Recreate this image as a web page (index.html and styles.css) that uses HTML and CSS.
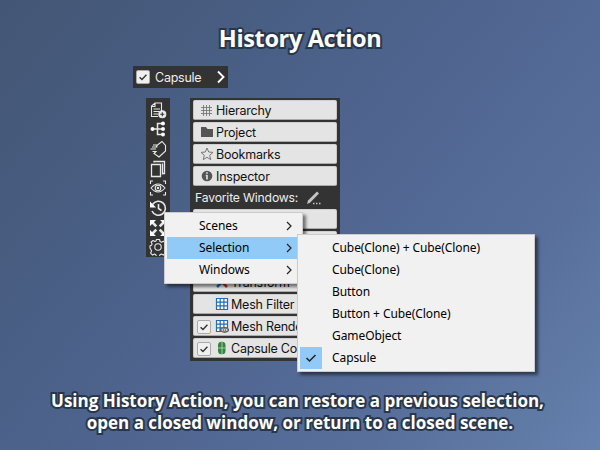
FILE: index.html
```html
<!DOCTYPE html>
<html lang="en">
<head>
<meta charset="utf-8">
<title>History Action</title>
<link rel="stylesheet" href="styles.css">
</head>
<body>
<main class="scene">
  <h1 class="title">History Action</h1>

  <div class="crumb">
    <span class="check"><svg viewBox="0 0 14 14"><path d="M3 7.3 5.8 10 11 4.3"/></svg></span>
    <span class="crumb-name">Capsule</span>
    <svg class="crumb-arrow" viewBox="0 0 10 14"><path d="M2 1.500 7.500 7 2 12.500"/></svg>
  </div>

  <div class="workspace">
    <nav class="toolbar">
      <svg viewBox="0 0 18 18"><path d="M9 15.5H2.5V5L6 2h6.500v8M6 2v3.500H2.500M4.500 8h6.500M4.500 10.500h6M4.500 13h4.500"/><circle cx="13.300" cy="13.300" r="3.500" fill="#eee"/><path d="M13.300 11.300v4M11.300 13.300h4" stroke="#333"/></svg>
      <svg viewBox="0 0 18 18"><path stroke-width="1.500" d="M3 9h11M13 3.500H8.500v11H13"/><g fill="#fff" stroke="none"><circle cx="3.500" cy="9" r="2"/><circle cx="14" cy="3.500" r="2"/><circle cx="14" cy="9" r="2"/><circle cx="14" cy="14.500" r="2"/></g></svg>
      <svg viewBox="0 0 18 18"><path d="M4 5h4.500L13 1.500 16.500 5.500V11l-6.500 6L5 13.500 7 11.500H3.500M1.500 9H7M3 7h5.500M8.500 5 7 7"/></svg>
      <svg viewBox="0 0 18 18"><path stroke-width="1.300" d="M2.500 4.500h9v12h-9zM5 2.500V1.500h10.500v12h-1.500M13.500 14.500V3.500"/></svg>
      <svg viewBox="0 0 18 18"><path d="M1.500 5V2H4M14 2h2.500v3M1.500 13v3H4M14 16h2.500v-3M2 9q7-8 14 0-7 8-14 0z"/><circle cx="9" cy="9" r="2.800"/><circle cx="9" cy="9" r=".7" fill="#fff"/></svg>
      <svg viewBox="0 0 18 18"><path stroke-width="1.600" d="M3.500 5.500A7 7 0 1 1 3 12M9.500 5v4.500l3 2"/><path fill="#fff" stroke="none" d="M1 2.500V8.500H7z"/></svg>
      <svg viewBox="0 0 18 18"><path stroke-width="2.600" d="M3 3l4.300 4.300M15 3l-4.300 4.300M3 15l4.300-4.300M15 15l-4.300-4.300"/><path fill="#fff" stroke="none" d="M1 1h6L1 7zM17 1h-6l6 6zM1 17h6l-6-6zM17 17h-6l6-6z"/></svg>
      <svg viewBox="0 0 18 18"><path stroke-linejoin="round" d="M7.500 1.500h3l.5 2 1.500.7 2-1 2 2-1 2 .6 1.300 1.400.5v2l-1.500.8-.6 1.500.9 1.800-2 2-2-1-1.300.7-.7 1.700H7.500l-.7-1.700-1.300-.7-1.900 1-2-2 1-2-.6-1.300L1 10V7.800l1.500-.6.6-1.300-1-1.900 2-1.500 1.700.9L7 3z"/><circle cx="9" cy="9" r="3.200"/></svg>
    </nav>

    <section class="panel">
      <div class="row"><svg viewBox="0 0 14 14"><path stroke="#777" d="M3.500 2v11M6.500 2v11M9.500 2v11M1 4.500h11M1 7.500h11M1 10.500h11" stroke-width=".9"/></svg><span>Hierarchy</span></div>
      <div class="row"><svg viewBox="0 0 14 14"><path fill="#555" d="M1 2h5l1.500 2H13v8H1z"/></svg><span>Project</span></div>
      <div class="row"><svg viewBox="0 0 14 14"><path stroke="#777" d="m7 1 1.700 4 4.300.4-3.300 2.900 1 4.300L7 10.300l-3.700 2.300 1-4.300L1 5.400 5.300 5z"/></svg><span>Bookmarks</span></div>
      <div class="row"><svg viewBox="0 0 14 14"><circle cx="7" cy="7" r="5.300" fill="#555"/><path stroke="#e4e4e4" stroke-width="1.600" d="M7 3.200v1.600M7 6v4.500M5.800 6.500H7"/></svg><span>Inspector</span></div>
      <div class="label"><span>Favorite Windows:</span><svg viewBox="0 0 16 16"><path fill="#c4c4c4" d="M1 14 2 10.500 11 1.500 13 3.500 4 12.700z"/><path stroke="#c4c4c4" stroke-width="1.500" stroke-dasharray="1.500 1.500" d="M7 13.500h8"/></svg></div>
      <div class="row"></div>
      <div class="row"></div>
      <div class="row component transform"><svg viewBox="0 0 14 14"><path stroke="#1f6fc0" stroke-width="2.500" d="M7 7l-5 5"/><path stroke="#c32a20" stroke-width="2.500" d="M7 7l5 5"/><path stroke="#398c3b" stroke-width="2" d="M7 7V1"/></svg><span>Transform</span></div>
      <div class="row component"><svg viewBox="0 0 14 14"><path fill="#fff" stroke="#246db5" stroke-width="1.200" d="M1.500 1.500h11v11h-11zM5.200 1.500v11M8.900 1.500v11M1.500 5.200h11M1.500 8.900h11"/></svg><span>Mesh Filter</span></div>
      <div class="row component"><i class="check"><svg viewBox="0 0 14 14"><path d="M3 7.300 5.800 10 11 4.300"/></svg></i><svg viewBox="0 0 14 14"><path fill="#fff" stroke="#246db5" stroke-width="1.200" d="M1.500 1.500h11v11h-11zM5.200 1.500v11M8.900 1.500v11M1.500 5.200h11M1.500 8.900h11"/><path fill="#e4e4e4" stroke="#666" stroke-width="1.300" d="M5 11q4.500-5 9 0-4.500 4.500-9 0z"/><circle cx="9.500" cy="10.900" r="1.300" stroke="#666"/></svg><span>Mesh Renderer</span></div>
      <div class="row component"><i class="check"><svg viewBox="0 0 14 14"><path d="M3 7.300 5.800 10 11 4.300"/></svg></i><svg viewBox="0 0 14 14"><rect x="3" y=".8" width="7.500" height="12.500" rx="3.500" fill="#34843a"/><path stroke="#b4d5b5" stroke-width=".9" d="M7 1v12M3 7h7.500"/></svg><span>Capsule Collider</span></div>
    </section>
  </div>

  <p class="caption"><span class="line-one">Using History Action, you can restore a previous selection,</span><br><span class="line-two">open a closed window, or return to a closed scene.</span></p>

  <div class="menu main-menu">
    <div class="item"><span>Scenes</span><svg viewBox="0 0 6 10"><path d="m1 1 4 4-4 4"/></svg></div>
    <div class="item active"><span>Selection</span><svg viewBox="0 0 6 10"><path d="m1 1 4 4-4 4"/></svg></div>
    <div class="item"><span>Windows</span><svg viewBox="0 0 6 10"><path d="m1 1 4 4-4 4"/></svg></div>
  </div>
  <div class="menu sub-menu">
    <div class="item"><span>Cube(Clone) + Cube(Clone)</span></div>
    <div class="item"><span>Cube(Clone)</span></div>
    <div class="item"><span>Button</span></div>
    <div class="item"><span>Button + Cube(Clone)</span></div>
    <div class="item"><span>GameObject</span></div>
    <div class="item"><i class="tick"><svg viewBox="0 0 12 10"><path d="m1.500 5 3 3L10.500 2"/></svg></i><span>Capsule</span></div>
  </div>
</main>
</body>
</html>
```

FILE: styles.css
```css
* { box-sizing: border-box; }
body { margin: 0; }
svg { display: block; flex: none; fill: none; }
.scene {
  position: relative;
  width: 600px;
  height: 450px;
  overflow: hidden;
  background: linear-gradient(130deg, #435675 0%, #485d81 25%, #4f6590 50%, #586f9b 76%, #6581ad 100%);
  font-family: Inter, "Liberation Sans", sans-serif;
  font-size: 12.5px;
}
.title, .caption {
  margin: 0;
  color: #fff;
  font-family: "Open Sans", "Noto Sans", sans-serif;
  font-weight: 700;
  text-align: center;
  -webkit-text-stroke: 4px #29374d;
  paint-order: stroke fill;
}
.title { height: 66px; padding-top: 22px; font-size: 23.5px; line-height: 32px; letter-spacing: -.35px; }
.caption { padding-top: 29px; font-size: 17px; line-height: 22px; white-space: nowrap; }
.line-one { margin-right: 5px; }
.crumb {
  display: flex;
  align-items: center;
  width: 95px;
  height: 22px;
  margin-left: 133px;
  padding: 0 2px 0 3px;
  background: #333;
  color: #eee;
}
.check {
  flex: none;
  width: 14px;
  height: 14px;
  border: 1px solid #aaa;
  border-radius: 2px;
  background: #f0f0f0;
}
.check svg { width: 12px; height: 12px; stroke: #333; stroke-width: 1.6; }
.crumb-name { margin-left: 5px; letter-spacing: -.25px; }
.crumb-arrow { width: 10px; height: 14px; margin-left: auto; stroke: #fff; stroke-width: 1.9; }
.workspace { display: flex; align-items: flex-start; gap: 20px; margin: 10px 0 0 146px; }
.toolbar {
  display: grid;
  grid-template-rows: repeat(8, 1fr);
  place-items: center;
  width: 24px;
  height: 159px;
  padding: 2px 0 0;
  background: #333;
}
.toolbar svg { width: 18px; height: 18px; stroke: #e8e8e8; stroke-width: 1.1; }
.panel {
  width: 150px;
  height: 263px;
  padding: 2px 3px;
  background: #333;
  color: #111;
}
.row {
  display: flex;
  align-items: center;
  height: 20px;
  margin-bottom: 2px;
  padding: 1px 0 0 6px;
  border: 1px solid #bcbcbc;
  border-color: #d0d0d0 #c8c8c8 #aaa;
  border-radius: 2px;
  background: #e4e4e4;
  letter-spacing: -.22px;
  white-space: nowrap;
  overflow: hidden;
}
.row > svg { width: 14px; height: 14px; margin-right: 2px; margin-top: -2px; }
.label { display: flex; align-items: center; height: 19px; margin-bottom: 2px; padding-left: 2px; color: #eee; font-size: 12.2px; letter-spacing: -.18px; white-space: nowrap; }
.label svg { width: 16px; height: 16px; margin-left: 8px; }
.component { justify-content: flex-start; padding-left: 21px; }
.component .check { width: 14px; height: 14px; margin: 0 4px 0 -18px; }
.transform { margin-top: 21px; }
.menu {
  position: absolute;
  padding: 2px;
  border: 1px solid #ccc;
  background: #f1f1f1;
  box-shadow: 3px 3px 3px rgba(0, 0, 0, .5);
  color: #000;
  font: 12px/22px "Noto Sans", "Open Sans", sans-serif;
  letter-spacing: -.08px;
}
.main-menu { left: 164px; top: 212px; width: 139px; height: 72px; }
.sub-menu { left: 297px; top: 234px; width: 238px; height: 138px; }
.item { display: flex; align-items: center; height: 22px; padding-left: 32px; white-space: nowrap; }
.item > svg { width: 6px; height: 10px; margin: 0 8px 0 auto; stroke: #222; stroke-width: 1.2; }
.active { background: #91c9f7; }
.tick { display: grid; place-items: center; width: 22px; height: 22px; margin: 0 10px 0 -32px; background: #91c9f7; }
.tick svg { width: 12px; height: 10px; stroke: #222; stroke-width: 1.5; }
```
